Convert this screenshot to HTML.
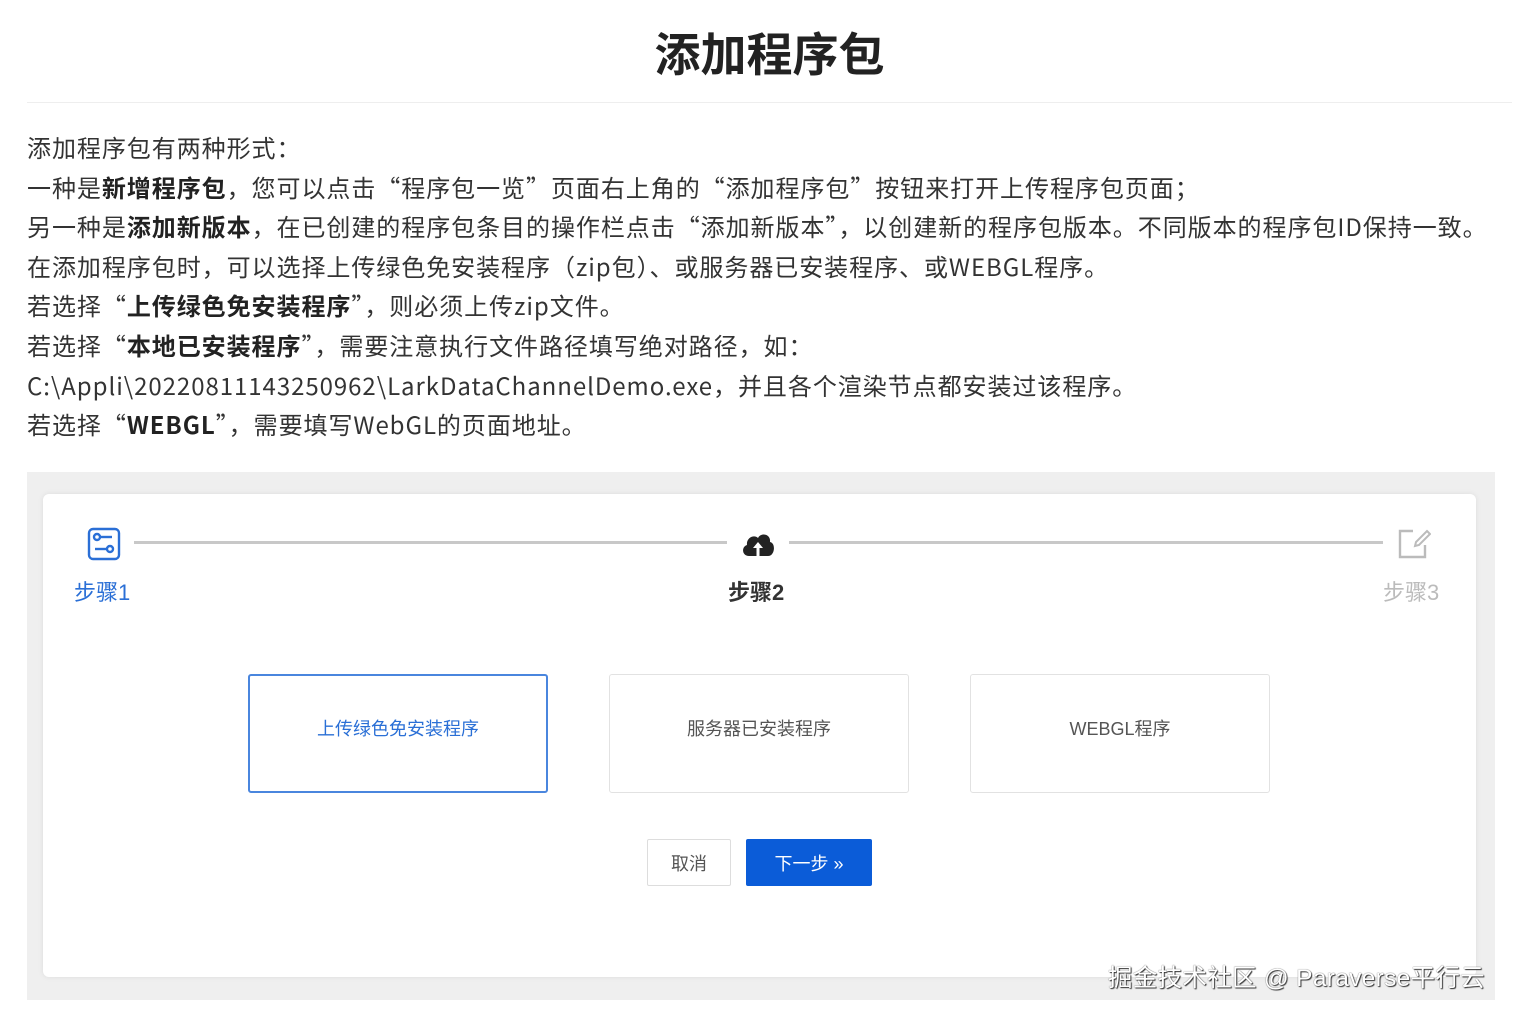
<!DOCTYPE html>
<html><head><meta charset="utf-8"><style>
body{margin:0;background:#fff;width:1513px;height:1015px;overflow:hidden;font-family:"Liberation Sans","Noto Sans CJK SC",sans-serif;color:#222;position:relative}
h1{position:absolute;left:0;width:1539px;top:22px;margin:0;text-align:center;font-size:46px;font-weight:bold;line-height:66px;color:#222}
.hr{position:absolute;left:27px;top:102px;width:1485px;height:1px;background:#eee}
.txt{position:absolute;left:27px;top:127px;font-size:24px;line-height:39.6px;letter-spacing:0.95px;white-space:nowrap;color:#333;font-family:"Noto Sans CJK SC",sans-serif}
.txt b{color:#222}
.gray{position:absolute;left:27px;top:472px;width:1468px;height:528px;background:#efefef}
.card{position:absolute;left:43px;top:494px;width:1433px;height:483px;background:#fff;border-radius:6px;box-shadow:0 0 6px rgba(0,0,0,0.08)}
.line{position:absolute;top:541px;height:3px;background:#c8c8c8}
.lab{position:absolute;top:578px;font-size:22px;line-height:30px}
.opt{position:absolute;top:674px;width:300px;height:119px;border:1px solid #e2e2e2;border-radius:3px;display:flex;align-items:center;justify-content:center;font-size:18px;color:#555;background:#fff;padding-bottom:12px;box-sizing:border-box}
.btn{position:absolute;top:839px;height:46px;display:flex;align-items:center;justify-content:center;font-size:18px;border-radius:2px}
.wm{position:absolute;left:1108px;top:959px;font-size:24.5px;color:#fff;text-shadow:0 0 1px #333,1px 1px 1px #333;letter-spacing:0.3px}
</style></head><body>
<h1>添加程序包</h1>
<div class="hr"></div>
<div class="txt">添加程序包有两种形式：<br>一种是<b>新增程序包</b>，您可以点击“程序包一览”页面右上角的“添加程序包”按钮来打开上传程序包页面；<br>另一种是<b>添加新版本</b>，在已创建的程序包条目的操作栏点击“添加新版本”，以创建新的程序包版本。不同版本的程序包ID保持一致。<br>在添加程序包时，可以选择上传绿色免安装程序（zip包）、或服务器已安装程序、或WEBGL程序。<br>若选择“<b>上传绿色免安装程序</b>”，则必须上传zip文件。<br>若选择“<b>本地已安装程序</b>”，需要注意执行文件路径填写绝对路径，如：<br>C:\Appli\20220811143250962\LarkDataChannelDemo.exe，并且各个渲染节点都安装过该程序。<br>若选择“<b>WEBGL</b>”，需要填写WebGL的页面地址。</div>
<div class="gray"></div>
<div class="card"></div>
<svg style="position:absolute;left:87px;top:527px" width="34" height="34" viewBox="0 0 34 34" fill="none" stroke="#2a6fd6" stroke-width="2.4"><rect x="2" y="2" width="30" height="30" rx="4"/><circle cx="10" cy="10" r="3"/><line x1="13" y1="10" x2="25" y2="10"/><circle cx="23" cy="22" r="3"/><line x1="8" y1="22" x2="20" y2="22"/></svg>
<div class="line" style="left:134px;width:593px"></div>
<svg style="position:absolute;left:740px;top:530px" width="36" height="28" viewBox="0 0 36 28"><path d="M9 26 C2 26 1 17 7 15 C6 8 14 4 18 8 C21 2 31 4 30 12 C36 13 35 26 28 26 Z" fill="#222"/><path d="M18 12 L13 18 H16.5 V26 H19.5 V18 H23 Z" fill="#fff"/></svg>
<div class="line" style="left:789px;width:594px"></div>
<svg style="position:absolute;left:1397px;top:527px" width="34" height="34" viewBox="0 0 34 34" fill="none" stroke="#bbb" stroke-width="2.4"><path d="M16 4 H3 V30 H28 V18"/><path d="M30 4 L33 7 L22 18 L18 19 L19 15 Z" stroke-width="2"/></svg>
<div class="lab" style="left:74px;color:#2a6fd6">步骤1</div>
<div class="lab" style="left:728px;color:#333;font-weight:bold">步骤2</div>
<div class="lab" style="left:1383px;color:#bbb">步骤3</div>
<div class="opt" style="left:248px;border:2px solid #4a86de;color:#2a6fd6">上传绿色免安装程序</div>
<div class="opt" style="left:609px">服务器已安装程序</div>
<div class="opt" style="left:970px">WEBGL程序</div>
<div class="btn" style="left:647px;width:82px;border:1px solid #ddd;color:#555;height:45px">取消</div>
<div class="btn" style="left:746px;width:126px;background:#0b5cd8;color:#fff;height:47px">下一步 »</div>
<div class="wm">掘金技术社区 @ Paraverse平行云</div>
</body></html>
